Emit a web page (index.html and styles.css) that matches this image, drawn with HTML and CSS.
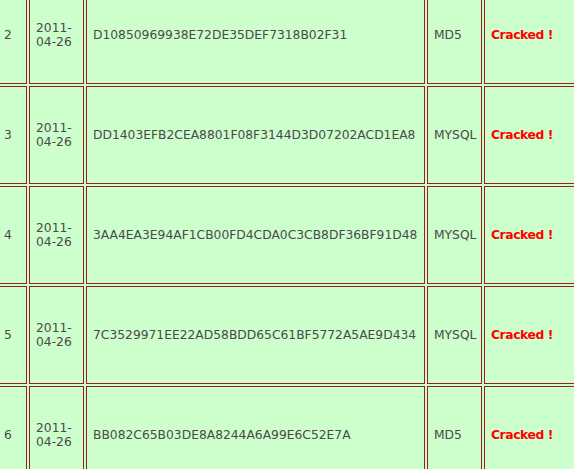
FILE: index.html
```html
<!DOCTYPE html>
<html>
<head>
<meta charset="utf-8">
<title>Hashes</title>
<link rel="stylesheet" href="styles.css">
</head>
<body>
<table class="hashes">
  <colgroup>
    <col class="c-id">
    <col class="c-date">
    <col class="c-hash">
    <col class="c-type">
    <col class="c-status">
  </colgroup>
  <tbody>
    <tr><td>2</td><td>2011-04-26</td><td>D10850969938E72DE35DEF7318B02F31</td><td>MD5</td><td class="status">Cracked !</td></tr>
    <tr><td>3</td><td>2011-04-26</td><td>DD1403EFB2CEA8801F08F3144D3D07202ACD1EA8</td><td>MYSQL</td><td class="status">Cracked !</td></tr>
    <tr><td>4</td><td>2011-04-26</td><td>3AA4EA3E94AF1CB00FD4CDA0C3CB8DF36BF91D48</td><td>MYSQL</td><td class="status">Cracked !</td></tr>
    <tr><td>5</td><td>2011-04-26</td><td>7C3529971EE22AD58BDD65C61BF5772A5AE9D434</td><td>MYSQL</td><td class="status">Cracked !</td></tr>
    <tr><td>6</td><td>2011-04-26</td><td>BB082C65B03DE8A8244A6A99E6C52E7A</td><td>MD5</td><td class="status">Cracked !</td></tr>
  </tbody>
</table>
</body>
</html>
```
FILE: styles.css
```css
html, body {
  margin: 0;
  padding: 0;
  background: #ccffcc;
  overflow: hidden;
}
.hashes {
  border-collapse: separate;
  border-spacing: 2px;
  table-layout: fixed;
  width: 691px;
  margin: -16px 0 0 -5px;
  font-family: "DejaVu Sans", Verdana, sans-serif;
  font-size: 12.3px;
  color: #4a4a4a;
}
.c-id { width: 30px; }
.c-date { width: 55px; }
.c-hash { width: 339px; }
.c-type { width: 55px; }
.c-status { width: 200px; }
.hashes tr {
  height: 98px;
}
.hashes td {
  box-sizing: border-box;
  border: 1px solid #9e1b20;
  background: #ccffcc;
  padding: 0 6px;
  vertical-align: middle;
  text-align: left;
  overflow: hidden;
}
.hashes td.status {
  color: #ff0000;
  font-weight: bold;
  letter-spacing: -0.4px;
}
```
